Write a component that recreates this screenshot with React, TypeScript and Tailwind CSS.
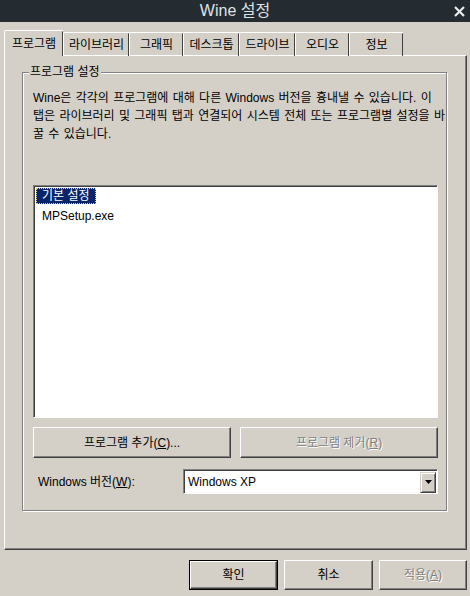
import React from 'react';

const font = { fontFamily: '"Liberation Sans", "Noto Sans CJK KR", sans-serif' };

const tabs = [
  { label: '프로그램', w: 'w-[59px]' },
  { label: '라이브러리', w: 'w-[66px]' },
  { label: '그래픽', w: 'w-[54px]' },
  { label: '데스크톱', w: 'w-[56px]' },
  { label: '드라이브', w: 'w-[56px]' },
  { label: '오디오', w: 'w-[54px]' },
  { label: '정보', w: 'w-[54px]' },
];

function Tab({ label, w, active }: { label: string; w: string; active?: boolean }) {
  if (active) {
    return (
      <div
        className={`${w} relative z-10 -mb-px flex h-[26px] items-start justify-center rounded-tl-[2px] border-l border-t border-white bg-[#d4d0c8] pt-[4px] shadow-[inset_-1px_0_0_#808080] text-[12px] text-black`}
      >
        <span className="border-r border-[#404040] absolute right-0 top-[1px] h-[24px]" />
        {label}
      </div>
    );
  }
  return (
    <div
      className={`${w} relative flex h-[23px] items-start justify-center rounded-tl-[2px] border-l border-t border-white pt-[3px] shadow-[inset_-1px_0_0_#808080] text-[12px] text-black`}
    >
      <span className="absolute right-0 top-[1px] h-[22px] border-r border-[#404040]" />
      {label}
    </div>
  );
}

function Button({
  children,
  className = '',
  disabled,
  isDefault,
}: {
  children: React.ReactNode;
  className?: string;
  disabled?: boolean;
  isDefault?: boolean;
}) {
  return (
    <div className={`${className} ${isDefault ? 'border border-black' : ''}`}>
      <div
        className={`flex h-full w-full items-center justify-center border-l border-t border-white border-r border-b border-r-[#404040] border-b-[#404040] shadow-[inset_-1px_-1px_0_#808080] text-[12px] ${
          disabled ? 'text-[#808080] [text-shadow:1px_1px_0_#fff]' : 'text-black'
        }`}
      >
        {children}
      </div>
    </div>
  );
}

export default function App() {
  return (
    <div className="flex h-[596px] w-[470px] flex-col bg-[#d4d0c8]" style={font}>
      {/* Title bar */}
      <div className="relative flex h-[22px] items-center justify-center bg-[#242b31] text-[16px] text-[#dfe3e6]">
        Wine 설정
        <svg className="absolute right-[4px] top-[5px]" width="13" height="13" viewBox="0 0 13 13">
          <path d="M2 2 L11 11 M11 2 L2 11" stroke="#e8ecef" strokeWidth="2.2" />
        </svg>
      </div>

      <div className="flex flex-col pl-[4px] pt-[8px]">
        {/* Tabs */}
        <div className="flex h-[25px] items-end">
          {tabs.map((t, i) => (
            <Tab key={t.label} label={t.label} w={t.w} active={i === 0} />
          ))}
        </div>

        {/* Tab page */}
        <div className="h-[495px] w-[463px] border-l border-t border-white border-r border-b border-r-[#404040] border-b-[#404040] shadow-[inset_-1px_-1px_0_#808080] pl-[17px] pt-[16px]">
          <div className="relative h-[439px] w-[425px] border border-[#808080] shadow-[inset_1px_1px_0_#fff,1px_1px_0_#fff] pl-[10px] pt-[16px]">
            <span className="absolute -top-[9px] left-[6px] bg-[#d4d0c8] px-[1px] text-[12px] leading-[16px] text-black">
              프로그램 설정
            </span>

            <p className="w-[405px] whitespace-nowrap text-[12px] leading-[18px] text-black [word-spacing:1px]">
              Wine은 각각의 프로그램에 대해 다른 Windows 버전을 흉내낼 수 있습니다. 이
              <br />
              탭은 라이브러리 및 그래픽 탭과 연결되어 시스템 전체 또는 프로그램별 설정을 바
              <br />
              꿀 수 있습니다.
            </p>

            {/* List box */}
            <div className="mt-[42px] h-[233px] w-[405px] border-l border-t border-[#808080] border-r border-b border-r-white border-b-white">
              <div className="h-full w-full border-l border-t border-[#404040] bg-white pl-[1px] pt-[1px]">
                <div className="flex h-[16px] w-[60px] items-center border border-dotted border-[#e6d58a] bg-[#0a246a] pl-[5px] text-[12px] text-white">
                  기본 설정
                </div>
                <div className="flex h-[24px] items-center pl-[6px] text-[12px] text-black">MPSetup.exe</div>
              </div>
            </div>

            {/* Buttons */}
            <div className="mt-[9px] flex w-[405px] gap-[9px]">
              <Button className="h-[31px] w-[198px]">
                프로그램 추가(<span className="underline">C</span>)...
              </Button>
              <Button className="h-[31px] w-[198px]" disabled>
                프로그램 제거(<span className="underline">R</span>)
              </Button>
            </div>

            {/* Windows version */}
            <div className="mt-[11px] flex w-[405px] items-center justify-between">
              <span className="pl-[5px] text-[12px] text-black">
                Windows 버전(<span className="underline">W</span>):
              </span>
              <div className="h-[25px] w-[255px] border-l border-t border-[#808080] border-r border-b border-r-white border-b-white">
                <div className="flex h-full w-full items-center justify-between border-l border-t border-[#404040] bg-white pr-[1px]">
                  <span className="pl-[3px] text-[12px] text-black">Windows XP</span>
                  <div className="flex h-[21px] w-[16px] items-center justify-center border-l border-t border-[#d4d0c8] border-r border-b border-r-[#404040] border-b-[#404040] bg-[#d4d0c8] shadow-[inset_1px_1px_0_#fff,inset_-1px_-1px_0_#808080]">
                    <svg width="7" height="4" viewBox="0 0 7 4">
                      <path d="M0 0 H7 L3.5 4 Z" fill="#000" />
                    </svg>
                  </div>
                </div>
              </div>
            </div>
          </div>
        </div>

        {/* Footer */}
        <div className="mt-[10px] flex w-[463px] justify-end gap-[6px]">
          <Button className="h-[30px] w-[89px]" isDefault>
            확인
          </Button>
          <Button className="h-[30px] w-[89px]">취소</Button>
          <Button className="h-[30px] w-[88px]" disabled>
            적용(<span className="underline">A</span>)
          </Button>
        </div>
      </div>
    </div>
  );
}
